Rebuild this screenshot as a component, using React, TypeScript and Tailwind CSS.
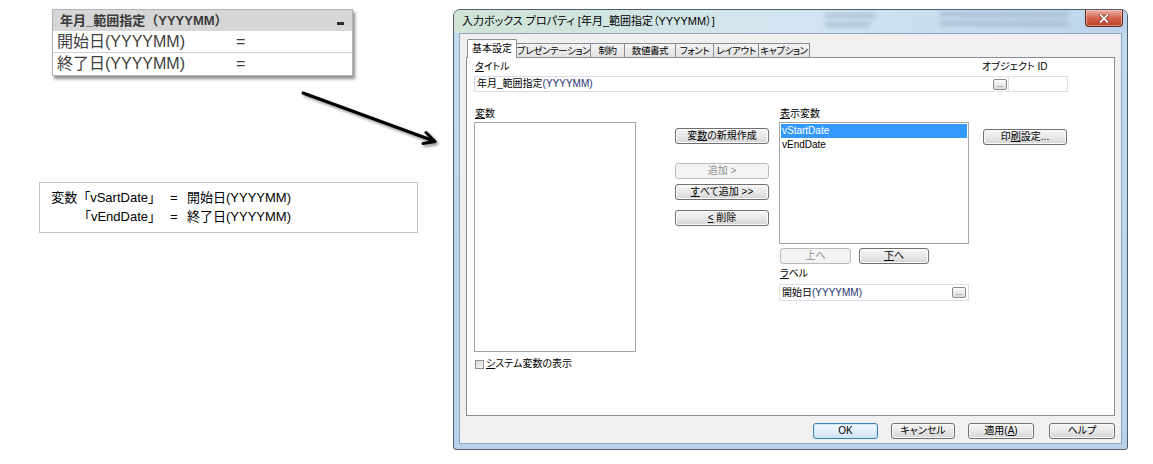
import React from "react";

const F = "font-['Liberation_Sans','Noto_Sans_CJK_JP',sans-serif]";

function Btn({
  w,
  children,
  disabled = false,
  primary = false,
}: {
  w: string;
  children: React.ReactNode;
  disabled?: boolean;
  primary?: boolean;
}) {
  const base =
    "h-[16px] flex items-center justify-center rounded-[3px] text-[10px] leading-none whitespace-nowrap";
  const normal =
    "border border-[#707070] bg-linear-to-b from-[#f5f5f5] via-[#e9e9e9] to-[#d4d4d4] shadow-[inset_0_0_0_1px_#fbfbfb] text-black";
  const dis = "border border-[#b9bcbf] bg-[#f4f4f4] text-[#8e8e8e]";
  const prim =
    "border border-[#3c7fb1] bg-linear-to-b from-[#f2f8fd] via-[#e4eff9] to-[#cfe3f3] shadow-[inset_0_0_0_1px_#cdeafb] text-black";
  return (
    <div className={`${base} ${w} ${disabled ? dis : primary ? prim : normal}`}>
      {children}
    </div>
  );
}

function Dots() {
  return (
    <div className="w-[14px] h-[11px] border border-[#8a8a8a] rounded-[2px] bg-linear-to-b from-[#fafafa] to-[#dcdcdc] flex items-end justify-center text-[8px] leading-[8px] text-[#333]">
      ...
    </div>
  );
}

const U = ({ children }: { children: React.ReactNode }) => (
  <span className="underline underline-offset-[1px] decoration-[1px]">{children}</span>
);

const TAB =
  "h-[14px] border border-l-0 border-b-0 border-[#898c95] bg-linear-to-b from-[#f3f3f3] to-[#e2e2e2] flex items-center justify-center whitespace-nowrap overflow-hidden";

export default function App() {
  return (
    <div className="relative w-[1153px] h-[464px] bg-white overflow-hidden">
      {/* QlikView input box widget */}
      <div className="absolute left-[52px] top-[9px] w-[301px] bg-white border border-[#b4b4b4] shadow-[2px_3px_3px_rgba(0,0,0,0.45)] font-['Liberation_Sans','Noto_Sans_CJK_JP',sans-serif]">
        <div className="h-[21px] bg-[#d6d6d6] flex items-center justify-between pl-[7px] pr-[8px]">
          <span className="text-[13px] font-bold text-[#3a3a3a] leading-none whitespace-nowrap">
            年月_範囲指定（YYYYMM）
          </span>
          <span className="w-[7px] h-[3px] bg-[#2b2b2b] mt-[5px]" />
        </div>
        <div className="h-[22px] flex items-center border-b border-[#d0d0d0] pl-[4px] text-[16px] text-[#3e3e3e] leading-none">
          <span className="w-[179px] whitespace-nowrap">開始日(YYYYMM)</span>
          <span>=</span>
        </div>
        <div className="h-[22px] flex items-center pl-[4px] text-[16px] text-[#3e3e3e] leading-none">
          <span className="w-[179px] whitespace-nowrap">終了日(YYYYMM)</span>
          <span>=</span>
        </div>
      </div>

      {/* note box */}
      <div className="absolute left-[39px] top-[182px] w-[379px] h-[51px] border border-[#c6c6c6] pt-[5px] pl-[11px] text-[13px] leading-[19px] text-black font-['Liberation_Sans','Noto_Sans_CJK_JP',sans-serif]">
        <div className="flex whitespace-nowrap">
          <span className="w-[110px] text-right">変数「vSartDate」</span>
          <span className="w-[26px] pl-[9px]">=</span>
          <span>開始日(YYYYMM)</span>
        </div>
        <div className="flex whitespace-nowrap">
          <span className="w-[110px] text-right">「vEndDate」</span>
          <span className="w-[26px] pl-[9px]">=</span>
          <span>終了日(YYYYMM)</span>
        </div>
      </div>

      {/* arrow */}
      <svg
        className="absolute left-[295px] top-[85px] drop-shadow-[2px_2px_1.5px_rgba(0,0,0,0.45)]"
        width="150"
        height="65"
        viewBox="0 0 150 65"
      >
        <path d="M8 8 L139 56" stroke="#000" strokeWidth="3" strokeLinecap="round" fill="none" />
        <path d="M131 47.5 L140 56.5 L128 58.5" stroke="#000" strokeWidth="3" strokeLinecap="round" strokeLinejoin="round" fill="none" />
      </svg>

      {/* dialog */}
      <div
        className={`absolute left-[453px] top-[9px] w-[675px] h-[441px] rounded-t-[7px] rounded-b-[3px] border border-[#4f5c6b] bg-linear-to-b from-[#c3dbe9] to-[#b9d1ea] px-[5px] pb-[5px] flex flex-col [font-feature-settings:'palt'] ${F}`}
      >
        <div className="relative h-[23px] flex items-center bg-linear-to-r from-[#cfe4d4] via-[#d3e5f1] to-[#bcd4ec] -mx-[5px] px-[8px] rounded-t-[6px]">
          <span className="text-[11px] text-black whitespace-nowrap leading-none relative z-10">
            入力ボックス プロパティ [年月_範囲指定（YYYYMM）]
          </span>
          <div className="absolute left-[371px] top-[3px] w-[50px] h-[5px] bg-[#7f95ae] opacity-40 blur-[2px]" />
          <div className="absolute left-[371px] top-[12px] w-[45px] h-[5px] bg-[#7f95ae] opacity-40 blur-[2px]" />
          <div className="absolute left-[486px] top-[2px] w-[128px] h-[5px] bg-[#7f95ae] opacity-40 blur-[2px]" />
          <div className="absolute left-[486px] top-[11px] w-[128px] h-[5px] bg-[#7f95ae] opacity-40 blur-[2px]" />
          <div className="absolute right-[4px] top-0 w-[38px] h-[17px] rounded-b-[4px] border border-t-0 border-[#5d2a22] bg-linear-to-b from-[#eab0a3] via-[#d4644e] to-[#c23d25] shadow-[inset_0_0_0_1px_rgba(255,220,210,0.5)] flex items-center justify-center">
            <svg width="10" height="9" viewBox="0 0 10 9">
              <path d="M1.5 1 L8.5 8 M8.5 1 L1.5 8" stroke="#6a2418" strokeWidth="3.2" strokeLinecap="round" />
              <path d="M1.5 1 L8.5 8 M8.5 1 L1.5 8" stroke="#ffffff" strokeWidth="1.8" strokeLinecap="round" />
            </svg>
          </div>
        </div>

        <div className="flex-1 bg-[#f0f0f0] border border-[#8fa5bf] flex flex-col px-[6px] pt-[5px]">
          {/* tabs */}
          <div className="flex items-end h-[18px] ml-[1px] text-[9.5px] tracking-[-0.4px] leading-none text-black">
            <div className="relative z-10 -mb-[1px] h-[19px] w-[50px] border border-b-0 border-[#898c95] bg-white flex items-center justify-center rounded-t-[2px] whitespace-nowrap text-[10px] tracking-normal">
              基本設定
            </div>
            <div className={`${TAB} w-[74px]`}>プレゼンテーション</div>
            <div className={`${TAB} w-[34px]`}>制約</div>
            <div className={`${TAB} w-[51px]`}>数値書式</div>
            <div className={`${TAB} w-[38px]`}>フォント</div>
            <div className={`${TAB} w-[45px]`}>レイアウト</div>
            <div className={`${TAB} w-[51px]`}>キャプション</div>
          </div>

          {/* panel */}
          <div className="h-[359px] border border-[#898c95] bg-white pl-[7px] pt-[3px] text-[10px] text-black">
            <div className="flex h-[12px] leading-[12px] whitespace-nowrap">
              <span className="w-[508px] pl-[1px]">
                <U>タ</U>イトル
              </span>
              <span>オブジェクト ID</span>
            </div>
            <div className="flex mt-[3px]">
              <div className="w-[535px] h-[16px] bg-white border border-[#d9dee5] flex items-center justify-between pl-[2px] pr-[1px] whitespace-nowrap">
                <span className="leading-none">
                  年月_範囲指定<span className="text-[#24306e]">(YYYYMM)</span>
                </span>
                <Dots />
              </div>
              <div className="w-[59px] h-[16px] bg-white border border-l-0 border-[#d9dee5]" />
            </div>

            <div className="flex items-start mt-[16px]">
              {/* left column */}
              <div className="w-[162px] flex flex-col">
                <div className="h-[12px] leading-[12px] pl-[1px]">
                  <U>変</U>数
                </div>
                <div className="mt-[2px] h-[230px] border border-[#a5a5a5] bg-white" />
                <div className="mt-[6px] h-[12px] flex items-center gap-[2px] pl-[1px] whitespace-nowrap">
                  <div className="w-[9px] h-[9px] border border-[#8f8f8f] bg-linear-to-br from-[#d8d8d8] to-[#f8f8f8]" />
                  <span className="leading-none">
                    <U>シ</U>ステム変数の表示
                  </span>
                </div>
              </div>

              {/* middle buttons */}
              <div className="ml-[39px] w-[94px] flex flex-col">
                <div className="mt-[20px]">
                  <Btn w="w-[94px]">
                    変<U>数</U>の新規作成
                  </Btn>
                </div>
                <div className="mt-[19px]">
                  <Btn w="w-[94px]" disabled>
                    追加 &gt;
                  </Btn>
                </div>
                <div className="mt-[5px]">
                  <Btn w="w-[94px]">
                    <U>す</U>べて追加 &gt;&gt;
                  </Btn>
                </div>
                <div className="mt-[10px]">
                  <Btn w="w-[94px]">
                    <U>&lt;</U>&nbsp;削除
                  </Btn>
                </div>
              </div>

              {/* right column */}
              <div className="ml-[10px] w-[190px] flex flex-col">
                <div className="h-[12px] leading-[12px] pl-[1px]">
                  <U>表</U>示変数
                </div>
                <div className="mt-[2px] h-[122px] border border-[#a5a5a5] bg-white p-[1px]">
                  <div className="h-[14px] bg-[#3399ff] text-white flex items-center pl-[1px] leading-none">
                    vStartDate
                  </div>
                  <div className="h-[14px] flex items-center pl-[1px] leading-none">vEndDate</div>
                </div>
                <div className="mt-[4px] flex">
                  <div className="ml-[1px]">
                    <Btn w="w-[71px]" disabled>
                      上へ
                    </Btn>
                  </div>
                  <div className="ml-[8px]">
                    <Btn w="w-[70px]">
                      <U>下</U>へ
                    </Btn>
                  </div>
                </div>
                <div className="mt-[4px] h-[12px] leading-[12px] pl-[1px]">
                  <U>ラ</U>ベル
                </div>
                <div className="mt-[4px] h-[17px] bg-white border border-[#d9dee5] flex items-center justify-between pl-[2px] pr-[2px] whitespace-nowrap">
                  <span className="leading-none">
                    開始日<span className="text-[#24306e]">(YYYYMM)</span>
                  </span>
                  <Dots />
                </div>
              </div>

              {/* far right */}
              <div className="ml-[14px] mt-[21px]">
                <Btn w="w-[84px]">
                  印<U>刷</U>設定...
                </Btn>
              </div>
            </div>
          </div>

          {/* footer buttons */}
          <div className="flex justify-end mt-[7px]">
            <Btn w="w-[65px]" primary>
              OK
            </Btn>
            <div className="ml-[13px]">
              <Btn w="w-[64px]">キャンセル</Btn>
            </div>
            <div className="ml-[13px]">
              <Btn w="w-[66px]">
                適用(<U>A</U>)
              </Btn>
            </div>
            <div className="ml-[15px]">
              <Btn w="w-[66px]">ヘルプ</Btn>
            </div>
          </div>
        </div>
      </div>
    </div>
  );
}
